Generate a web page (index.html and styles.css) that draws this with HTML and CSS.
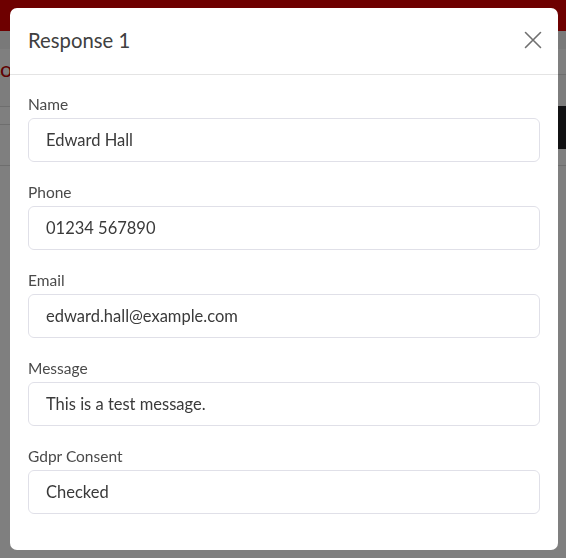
FILE: index.html
```html
<!DOCTYPE html>
<html lang="en">
<head>
<meta charset="utf-8">
<title>Response 1</title>
<link rel="stylesheet" href="styles.css">
</head>
<body>
<div class="page">
  <header class="navbar"></header>
  <div class="subbar"></div>
  <div class="content">
    <div class="page-title">oc</div>
    <div class="toolbar"><span class="dark-btn"></span></div>
    <div class="row"></div>
    <div class="row"></div>
  </div>
</div>
<div class="backdrop"></div>
<div class="modal" role="dialog" aria-labelledby="modal-title">
  <div class="modal-header">
    <h5 class="modal-title" id="modal-title">Response 1</h5>
    <button class="close" type="button" aria-label="Close">
      <svg width="18" height="18" viewBox="0 0 18 18" aria-hidden="true"><path d="M1.5 1.5 L16.5 16.5 M16.5 1.5 L1.5 16.5" stroke="#707070" stroke-width="1.6" fill="none" stroke-linecap="round"/></svg>
    </button>
  </div>
  <div class="modal-body">
    <div class="field">
      <label class="field-label">Name</label>
      <div class="field-value">Edward Hall</div>
    </div>
    <div class="field">
      <label class="field-label">Phone</label>
      <div class="field-value">01234 567890</div>
    </div>
    <div class="field">
      <label class="field-label">Email</label>
      <div class="field-value">edward.hall@example.com</div>
    </div>
    <div class="field">
      <label class="field-label">Message</label>
      <div class="field-value">This is a test message.</div>
    </div>
    <div class="field">
      <label class="field-label">Gdpr Consent</label>
      <div class="field-value">Checked</div>
    </div>
  </div>
</div>
</body>
</html>
```
FILE: styles.css
```css
* { box-sizing: border-box; }
html, body { margin: 0; padding: 0; }
body {
  font-family: Lato, "Noto Sans", "Liberation Sans", sans-serif;
  background: #ffffff;
  width: 566px;
  height: 558px;
  overflow: hidden;
}
.page { width: 566px; height: 558px; }
.navbar { height: 31px; background: #dc0000; }
.subbar { height: 18px; background: #f2f2f2; }
.content { position: relative; }
.page-title {
  height: 26px;
  padding-top: 12px;
  font-size: 22px;
  line-height: 16px;
  color: #c00000;
  border-bottom: 1px solid #dddddd;
}
.toolbar {
  height: 32px;
  display: flex;
  justify-content: flex-end;
  align-items: flex-end;
  background: #fafafa;
  border-bottom: 1px solid #dddddd;
}
.dark-btn { display: block; width: 40px; height: 43px; background: #222326; margin-bottom: -43px; }
.row { height: 18px; border-bottom: 1px solid #dddddd; }
.row + .row { height: 41px; }

.backdrop {
  position: fixed;
  inset: 0;
  background: rgba(0, 0, 0, 0.5);
}
.modal {
  position: fixed;
  left: 10px;
  top: 8px;
  width: 548px;
  height: 542px;
  background: #ffffff;
  border-radius: 7px;
  display: flex;
  flex-direction: column;
}
.modal-header {
  height: 68px;
  border-bottom: 1px solid #e4e4e4;
  display: flex;
  align-items: center;
  justify-content: space-between;
  padding: 0 16px 2px 18px;
}
.modal-title {
  margin: 0;
  font-size: 20.3px;
  font-weight: 400;
  color: #404040;
  line-height: 30px;
}
.close {
  border: 0;
  background: transparent;
  padding: 0;
  width: 18px;
  height: 18px;
  display: block;
  cursor: pointer;
}
.close svg { display: block; }
.modal-body {
  padding: 18px 18px 36px 18px;
  display: flex;
  flex-direction: column;
  gap: 19px;
}
.field { display: flex; flex-direction: column; gap: 3px; }
.field-label {
  font-size: 15.5px;
  line-height: 22px;
  color: #4a4a4a;
}
.field-value {
  height: 44px;
  border: 1px solid #e0e0e8;
  border-radius: 6px;
  padding: 0 17px 1px;
  display: flex;
  align-items: center;
  font-size: 16.5px;
  color: #3a3a3a;
}
```
